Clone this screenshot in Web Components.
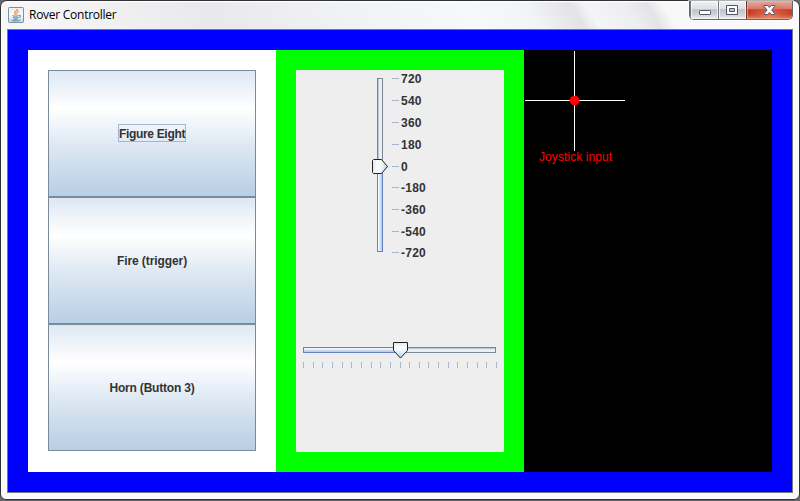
<!DOCTYPE html>
<html lang="en"><head><meta charset="utf-8"><title>Rover Controller</title>
<style>html,body{margin:0;height:100%;overflow:hidden;background:#65676a}</style></head>
<body>
<rover-window caption="Rover Controller">
  <button-panel>
    <metal-button focused style="letter-spacing:-.32px">Figure Eight</metal-button>
    <metal-button style="letter-spacing:-.08px">Fire (trigger)</metal-button>
    <metal-button style="letter-spacing:-.2px">Horn (Button 3)</metal-button>
  </button-panel>
  <slider-panel>
    <speed-slider></speed-slider>
    <turn-slider></turn-slider>
  </slider-panel>
  <joystick-view>Joystick input</joystick-view>
</rover-window>
<script>
const define = (name, html, setup) => customElements.define(name, class extends HTMLElement {
  constructor() {
    super();
    this.attachShadow({mode: 'open'}).innerHTML = html;
  }
  connectedCallback() { if (setup) setup(this, this.shadowRoot); }
});

define('java-icon', `<style>:host{display:block;width:16px;height:16px}svg{display:block}</style>
<svg width="16" height="16" viewBox="0 0 16 16">
<defs><linearGradient id="b" x2="0" y2="1"><stop stop-color="#e9eff3"/><stop offset=".5" stop-color="#f7fafb"/><stop offset="1" stop-color="#c0d2de"/></linearGradient></defs>
<rect x=".5" y=".5" width="15" height="15" rx=".8" fill="url(#b)" stroke="#7892a5"/>
<path d="M9.2 2C9.6 4 6.3 4.2 6.6 6c.1.7.8 1.2.9 1.9" fill="none" stroke="#ee8427" stroke-width="1.2"/>
<path d="M10.8 4.3C9 5 8.4 5.6 8.9 6.5c.3.6 0 1-.4 1.4" fill="none" stroke="#ee8427"/>
<path d="M4.5 8.7c1.5.6 4.7.6 6.2 0M11 8.3c2.4-.4 1.9 1.9-.4 2.3M5.2 10.6c1.5.5 3.7.5 5 0M5.600 12c1.3.4 2.8.4 3.9 0M3.9 13.1c-.6.8 6.7 1.1 8.5-.2" fill="none" stroke="#4d7b9c" stroke-width=".95"/>
</svg>`);

define('window-controls', `<style>
:host{display:flex;box-sizing:border-box;width:104px;height:19px;align-self:flex-start;border:1px solid #64666c;border-top:0;border-radius:0 0 5px 5px;overflow:hidden;box-shadow:0 0 1px 1px #ffffffb0}
span{display:block;box-sizing:border-box;flex:none;width:28px;border-left:1px solid #777980;background:linear-gradient(#f1f2f3,#dedfe2 45%,#bfc1c5 48%,#d4d6d9 80%,#eff0f1);box-shadow:inset 0 0 0 1px #ffffffa0}
span:first-child{width:27px;border:0}
span:last-child{width:47px;border-color:#7e302a;background:radial-gradient(ellipse at 50% 110%,#ed8d62 0,#e06c4a80 40%,transparent 70%),linear-gradient(#e9aa9e,#d67969 45%,#c23d27 48%,#c94327 75%,#dc8468);box-shadow:inset 0 0 0 1px #f0b2a4a0}
svg{display:block}
</style>
<span><svg width="27" height="18"><rect x="8.5" y="9.5" width="11" height="4" rx=".7" fill="#fff" stroke="#535566"/></svg></span>
<span><svg width="27" height="18"><path d="M7.5 4.5h11v9h-11zM10.5 7.5v3h5v-3z" fill="#fff" fill-rule="evenodd" stroke="#535566" stroke-linejoin="round"/></svg></span>
<span><svg width="46" height="18"><path d="M17.2 4.500h3.300l1.900 2 1.900-2h3.300v1l-2.900 3.500 2.900 3.500v1h-3.300l-1.900-2-1.900 2h-3.300v-1l2.900-3.500-2.900-3.500z" fill="#fff" stroke="#575064" stroke-linejoin="round"/></svg></span>`);

define('title-bar', `<style>
:host{display:flex;height:28px;box-sizing:border-box;padding:0 6px 0 7px;flex:none}
java-icon{margin:6px 5px 0 0}
.cap{flex:1;font:12px/28px "Open Sans","Noto Sans",sans-serif;color:#000;white-space:nowrap}
.cap span{display:inline-block;letter-spacing:-.26px}
</style><java-icon></java-icon><div class="cap"><span><slot></slot></span></div><window-controls></window-controls>`);

define('rover-window', `<style>
:host{display:flex;flex-direction:column;box-sizing:border-box;width:800px;height:500px;border:1px solid #303136;border-radius:7px 7px 6px 6px;
background:linear-gradient(#fff,#ffffff00 2px) 0 0/100% 28px no-repeat,linear-gradient(59deg,#f7f7f7 0,#f2f2f3 84px,#e9e9eb 187px,#f1f2f4 307px,#f7f8fa 410px,#f3f4f5 461px,#e3e3e5 500px,#f4f5f6 514px,#eeeef0 547px,#e4e4e6 566px,#f8f8f9 580px,#fafafa 100%) 0 0/100% 28px no-repeat,#faf9f9;
padding:0 6px 6px;box-shadow:inset 0 0 0 1px #fff}
title-bar{margin:0 -6px}
.client{display:grid;grid-template-columns:repeat(3,248px);box-sizing:border-box;width:786px;height:464px;border:1px solid #77797b;background:#00f;padding:20px}
</style><title-bar></title-bar><div class="client"><slot></slot></div>`, (el, root) => {
  root.querySelector('title-bar').textContent = el.getAttribute('caption');
});

define('button-panel', `<style>:host{display:grid;grid-template-rows:repeat(3,127px);box-sizing:border-box;height:422px;padding:20px;background:#fff}</style><slot></slot>`);

define('metal-button', `<style>
:host{display:flex;align-items:center;justify-content:center;box-sizing:border-box;border:1px solid #7a8a99;background:linear-gradient(#dde8f3,#fff 30%,#dde8f3 60%,#b8cfe5);color:#333;font:bold 12px/18px "Liberation Sans",Arial,sans-serif}
span{display:block;border:1px solid transparent;white-space:nowrap;height:16px;margin-bottom:2px}
:host([focused]) span{border-color:#a3b8cc}
</style><span><slot></slot></span>`);

define('slider-panel', `<style>:host{display:flex;flex-direction:column;box-sizing:border-box;height:422px;border:20px solid #0f0;background:#eee}</style><slot></slot>`);

define('speed-slider', `<style>:host{display:block;height:191px}svg{display:block}text{font:bold 12px "Liberation Sans",Arial,sans-serif;fill:#333;letter-spacing:.25px}</style>
<svg width="208" height="191" shape-rendering="crispEdges">
<defs><linearGradient id="f"><stop stop-color="#fff"/><stop offset=".35" stop-color="#e8f0f8"/><stop offset="1" stop-color="#a3bfe4"/></linearGradient>
<linearGradient id="t"><stop stop-color="#dde8f3"/><stop offset=".35" stop-color="#fff"/><stop offset=".6" stop-color="#f2f6fa"/><stop offset="1" stop-color="#b8cfe5"/></linearGradient></defs>
<rect x="81.5" y="8.5" width="5" height="173" fill="#eee" stroke="#7a8a99"/><path d="M82.5 9v87" stroke="#b8c5d1"/>
<rect x="81.5" y="96.5" width="5" height="85" fill="url(#f)" stroke="#6382bf"/>
<path d="M77.5 89.5h8l6 7-6 7h-8l-1-1v-12z" fill="url(#t)" stroke="#222" shape-rendering="auto"/>
<g id="marks"></g></svg>`, (el, root) => {
  const ys = [8,30,52,74,96,117,139,161,182];
  root.getElementById('marks').innerHTML = ys.map((y, i) => `<path d="M96 ${y}.5h7" stroke="#a3b8cc"/><text x="105" y="${y + 5}">${720 - i * 180}</text>`).join('');
});

define('turn-slider', `<style>:host{display:block;height:191px}svg{display:block}</style>
<svg width="208" height="191" shape-rendering="crispEdges">
<defs><linearGradient id="f" x2="0" y2="1"><stop stop-color="#fff"/><stop offset=".35" stop-color="#e8f0f8"/><stop offset="1" stop-color="#a3bfe4"/></linearGradient>
<linearGradient id="t" x2="0" y2="1"><stop stop-color="#dde8f3"/><stop offset=".35" stop-color="#fff"/><stop offset=".6" stop-color="#e7eff6"/><stop offset="1" stop-color="#b8cfe5"/></linearGradient></defs>
<rect x="7.5" y="86.5" width="192" height="5" fill="#eee" stroke="#7a8a99"/><path d="M104 87.5h95" stroke="#b8c5d1"/>
<rect x="7.5" y="86.5" width="97" height="5" fill="url(#f)" stroke="#6382bf"/>
<path d="M97.5 81.5h14v8l-7 7.5-7-7.5z" fill="url(#t)" stroke="#222" shape-rendering="auto"/>
<g id="marks"></g></svg>`, (el, root) => {
  root.getElementById('marks').innerHTML = Array.from({length: 21}, (_, i) =>
    `<path d="M${Math.round(7 + i * 9.65)}.5 101v6" stroke="#a3b8cc"/>`).join('');
});

define('joystick-view', `<style>:host{display:block;box-sizing:border-box;height:422px;background:#000;color:#f00}
svg{display:block}div{font:12px/14px "Liberation Sans",Arial,sans-serif;letter-spacing:.08px;padding-left:15px;margin-top:-1px;white-space:nowrap}</style>
<svg width="248" height="101"><path d="M50.5 1v100M1 50.5h100" stroke="#fff"/><circle cx="50.5" cy="50.5" r="4.8" fill="#f00"/></svg>
<div><slot></slot></div>`);
</script>
</body></html>
